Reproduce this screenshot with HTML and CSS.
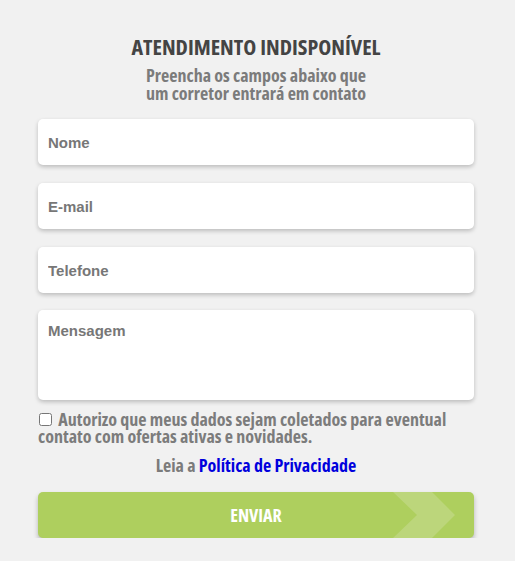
FILE: index.html
```html
<!DOCTYPE html>
<html lang="pt-BR">
<head>
<meta charset="utf-8">
<link rel="stylesheet" href="styles.css">
</head>
<body>
<main class="panel">
  <h1 class="title">ATENDIMENTO INDISPONÍVEL</h1>
  <p class="subtitle">Preencha os campos abaixo que<br>um corretor entrará em contato</p>
  <form class="form">
    <input class="field" type="text" placeholder="Nome">
    <input class="field" type="email" placeholder="E-mail">
    <input class="field tel" type="tel" placeholder="Telefone">
    <textarea class="field area" placeholder="Mensagem"></textarea>
    <label class="consent"><input type="checkbox" class="check"> Autorizo que meus dados sejam coletados para eventual contato com ofertas ativas e novidades.</label>
    <p class="policy">Leia a <a href="#" class="link">Política de Privacidade</a></p>
    <button type="button" class="send">
      <span class="chev"><svg width="62" height="46" viewBox="0 0 62 46"><polygon points="0,0 39,0 62,23 39,46 0,46 24,23" fill="#bcd67b"/></svg></span>
      <span class="send-label">ENVIAR</span>
    </button>
  </form>
</main>
</body>
</html>
```
FILE: styles.css
```css
html, body { margin: 0; padding: 0; }
body {
  background: #f1f1f1;
  font-family: "Open Sans", "Liberation Sans", sans-serif;
  font-stretch: 75%;
}
.panel {
  width: 436px;
  margin: 0 0 0 38px;
  padding-top: 33px;
}
.title {
  margin: 0;
  text-align: center;
  font-size: 22px;
  line-height: 26px;
  font-weight: 700;
  color: #444;
}
.subtitle {
  margin: 7px 0 0;
  text-align: center;
  font-size: 18px;
  line-height: 18px;
  font-weight: 700;
  color: #7b7b7b;
}
.form {
  display: flex;
  flex-direction: column;
  margin-top: 17px;
}
.field {
  box-sizing: border-box;
  display: block;
  width: 100%;
  height: 46px;
  margin: 0 0 18px;
  border: 0;
  border-radius: 5px;
  background: #fff;
  box-shadow: 0 2px 4px rgba(0,0,0,0.22);
  padding: 0 10px;
  font-family: "Liberation Sans", Arial, sans-serif;
  font-stretch: normal;
  font-weight: 700;
  font-size: 15px;
  color: #555;
  outline: none;
}
.field::placeholder { color: #777; opacity: 1; }
.tel { margin-bottom: 17px; }
.area {
  height: 90px;
  padding-top: 12px;
  resize: none;
  margin-bottom: 11px;
}
.consent {
  display: block;
  font-size: 18px;
  line-height: 17px;
  font-weight: 700;
  color: #7c7c7c;
}
.check {
  margin: 0 3px 0 1px;
  width: 13px;
  height: 13px;
  vertical-align: 0;
}
.policy {
  margin: 9px 0 0;
  text-align: center;
  font-size: 18px;
  line-height: 22px;
  font-weight: 700;
  color: #7b7b7b;
}
.link { color: #0000dd; text-decoration: none; }
.send {
  position: relative;
  margin-top: 16px;
  height: 46px;
  width: 100%;
  border: 0;
  border-radius: 5px;
  background: #aecf5e;
  box-shadow: 0 3px 5px rgba(0,0,0,0.25);
  overflow: hidden;
  font-family: inherit;
  font-stretch: 75%;
  font-size: 18px;
  font-weight: 700;
  color: #fff;
  padding: 0;
}
.chev {
  position: absolute;
  top: 0;
  right: 19px;
  height: 46px;
}
.chev svg { display: block; }
.send-label { position: relative; }
```
